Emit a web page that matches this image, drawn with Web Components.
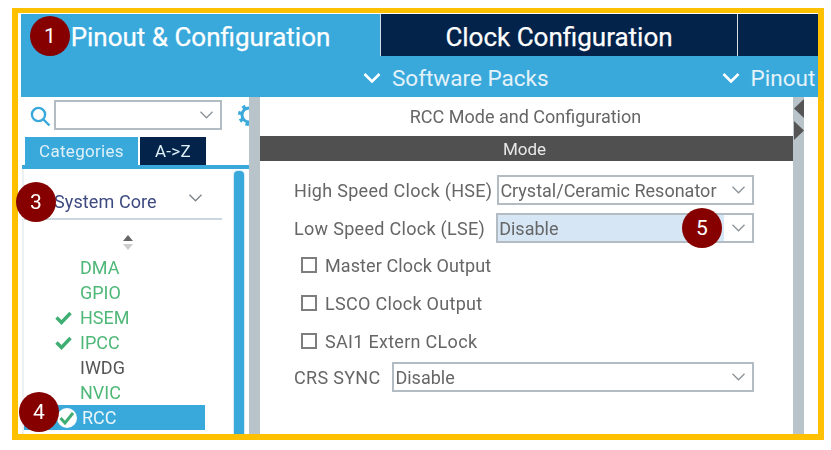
<!DOCTYPE html>
<html>
<head>
<meta charset="utf-8">
<style>
  html, body { margin: 0; background: #fff; }
  body { width: 831px; height: 450px; overflow: hidden; font-family: Roboto, "Liberation Sans", sans-serif; }
</style>
</head>
<body>
<cube-frame>
  <top-tabs></top-tabs>
  <sub-menu></sub-menu>
  <div slot="left"><side-panel></side-panel></div>
  <div slot="right"><mode-panel></mode-panel></div>
</cube-frame>
<step-badge n="1" style="left:30px;top:16px"></step-badge>
<step-badge n="3" style="left:16px;top:182px"></step-badge>
<step-badge n="4" style="left:19px;top:392px"></step-badge>
<step-badge n="5" style="left:682px;top:208px"></step-badge>

<script>
const CHEVRON = (w, h, color, sw) => `<svg width="${w}" height="${h}" viewBox="0 0 18 10" fill="none" stroke="${color}" stroke-width="${sw}" style="display:block;flex:none"><path d="M1.5 1 L9 8.5 L16.5 1"/></svg>`;

class CubeFrame extends HTMLElement {
  constructor() {
    super();
    this.shadowDOM = this.attachShadow({ mode: 'open' });
  }

  connectedCallback() {
    this.shadowDOM.innerHTML = `
    <style>
      :host {
        display: block;
        box-sizing: border-box;
        width: 812px;
        height: 432px;
        margin: 8px 0 0 12px;
        border: solid #ffc000;
        border-width: 5px 6px 6px 6px;
        background: #fff;
        overflow: hidden;
      }
      .inner { display: flex; flex-direction: column; height: 100%; box-sizing: border-box; padding: 1px 0 0 3px; filter: blur(.35px); }
      .body { display: flex; flex: 1; min-height: 0; }
    </style>
    <div class="inner">
      <slot></slot>
      <div class="body">
        <slot name="left"></slot>
        <slot name="right"></slot>
      </div>
    </div>
    `;
  }
}

class TopTabs extends HTMLElement {
  constructor() {
    super();
    this.shadowDOM = this.attachShadow({ mode: 'open' });
  }

  connectedCallback() {
    this.shadowDOM.innerHTML = `
    <style>
      :host { display: flex; height: 42px; background: #03234b; color: #fff; font-size: 26px; -webkit-text-stroke: .25px #fff; }
      div { display: flex; align-items: center; justify-content: center; box-sizing: border-box; padding-top: 3px; border-right: 1px solid #d5dde3; }
      .on { width: 360px; background: #39a9dc; }
      .off { width: 357px; }
      .end { flex: 1; border: 0; }
    </style>
    <div class="on">Pinout &amp; Configuration</div>
    <div class="off">Clock Configuration</div>
    <div class="end"></div>
    `;
  }
}

class SubMenu extends HTMLElement {
  constructor() {
    super();
    this.shadowDOM = this.attachShadow({ mode: 'open' });
  }

  connectedCallback() {
    this.shadowDOM.innerHTML = `
    <style>
      :host { display: flex; align-items: center; height: 41px; padding-left: 342px; background: #39a9dc; color: #e4f2f9; font-size: 22.5px; white-space: nowrap; overflow: hidden; }
      span { display: flex; align-items: center; gap: 11px; padding-top: 3px; }
      span + span { margin-left: 173px; }
    </style>
    <span>${CHEVRON(18, 10, '#fff', 2.6)}Software Packs</span>
    <span>${CHEVRON(18, 10, '#fff', 2.6)}Pinout</span>
    `;
  }
}

class ComboBox extends HTMLElement {
  constructor() {
    super();
    this.shadowDOM = this.attachShadow({ mode: 'open' });
  }

  connectedCallback() {
    this.shadowDOM.innerHTML = `
    <style>
      :host { display: flex; align-items: center; box-sizing: border-box; height: 30px; min-width: 0; border: 2px solid #b3bcc2; background: #fff; color: #666; font-size: 18px; letter-spacing: 0; white-space: nowrap; }
      :host([selected]) .text { background: #d6e6f5; align-self: stretch; display: flex; align-items: center; }
      .text { flex: 1; min-width: 0; padding-left: 1px; }
      .arrow { width: 28px; flex: none; display: flex; justify-content: center; }
    </style>
    <div class="text">${this.getAttribute('label') || '&nbsp;'}</div>
    <div class="arrow">${CHEVRON(15, 8, '#8b9297', 1.6)}</div>
    `;
  }
}

class SidePanel extends HTMLElement {
  constructor() {
    super();
    this.shadowDOM = this.attachShadow({ mode: 'open' });
  }

  connectedCallback() {
    const CHECK = `<svg style="display:block" width="17" height="14" viewBox="0 0 17 14" fill="none" stroke="#3fae72" stroke-width="3.4"><path d="M1.5 6.5 L6.5 11.5 L15.5 2"/></svg>`;
    const item = (name, color, check) => `<div class="item" style="color:${color}"><i>${check ? CHECK : ''}</i>${name}</div>`;
    this.shadowDOM.innerHTML = `
    <style>
      :host { display: flex; width: 239px; height: 100%; }
      .main { width: 228px; overflow: hidden; display: flex; flex-direction: column; }
      .strip { width: 11px; background: #b9c4ca; }
      .search { display: flex; align-items: flex-start; height: 40px; box-sizing: border-box; flex: none; padding: 3px 0 0 9px; overflow: hidden; }
      .search .lens { margin-top: 6px; flex: none; }
      .search combo-box { width: 168px; flex: none; margin-left: 3px; }
      .gear { margin: 3px 0 0 15px; flex: none; }
      .tabs { display: flex; gap: 2px; height: 28px; flex: none; padding-left: 4px; font-size: 17px; letter-spacing: .3px; color: #dff0f8; }
      .tabs div { display: flex; align-items: center; justify-content: center; padding-bottom: 1px; box-sizing: border-box; }
      .cat { width: 113px; background: #39a9dc; }
      .az { width: 66px; background: #03234b; }
      .rule { height: 4px; flex: none; margin-left: 1px; background: #39a9dc; }
      .content { flex: 1; display: flex; min-height: 0; border-left: 2px solid #eef0f2; margin-left: 1px; }
      .list { flex: 1; min-width: 0; }
      .bar { width: 10px; margin: 2px 5px 0 0; border-radius: 4px 4px 0 0; background: #39a9dc; box-shadow: 0 0 0 1px #d4ecf7; }
      .head { display: flex; align-items: center; justify-content: space-between; height: 51px; margin: 0 12px 0 0; padding: 16px 19px 0 30px; box-sizing: border-box; border-bottom: 2px solid #ccd6de; color: #3d4a80; font-size: 18px; letter-spacing: .1px; }
      .head svg { margin-top: -8px; }
      .sort { display: block; margin: 15px 0 0 98px; }
      .items { margin-top: 5px; }
      .item { display: flex; align-items: center; height: 25px; font-size: 18px; }
      .item i { width: 56px; padding-left: 31px; box-sizing: border-box; display: block; height: 14px; }
      .item.sel { width: 181px; background: #39a9dc; color: #e8f5fb !important; }
      .item.sel i { height: 18px; width: 58px; padding-left: 33px; }
      .dot { display: block; width: 20px; height: 20px; margin-top: -1px; border-radius: 50%; background: #fff; }
    </style>
    <div class="main">
      <div class="search">
        <svg class="lens" width="21" height="21" viewBox="0 0 21 21" fill="none" stroke="#39a9dc" stroke-width="2.4"><circle cx="8.5" cy="8.5" r="6.6"/><path d="M13.5 13.5 L19.5 19.5"/></svg>
        <combo-box></combo-box>
        <svg class="gear" width="24" height="24" viewBox="0 0 24 24"><circle cx="12" cy="12" r="7" fill="none" stroke="#39a9dc" stroke-width="3"/><circle cx="12" cy="12" r="9.5" fill="none" stroke="#39a9dc" stroke-width="3" stroke-dasharray="3.5 3.96"/></svg>
      </div>
      <div class="tabs"><div class="cat">Categories</div><div class="az">A-&gt;Z</div></div>
      <div class="rule"></div>
      <div class="content">
        <div class="list">
          <div class="head">System Core ${CHEVRON(15, 8, '#7b8288', 1.6)}</div>
          <svg class="sort" width="12" height="15" viewBox="0 0 12 15"><path d="M6 0 L11 6 H1z" fill="#666"/><path d="M6 15 L11 9 H1z" fill="#ccc"/></svg>
          <div class="items">
            ${item('DMA', '#4fb878')}
            ${item('GPIO', '#4fb878')}
            ${item('HSEM', '#4fb878', true)}
            ${item('IPCC', '#4fb878', true)}
            ${item('IWDG', '#555')}
            ${item('NVIC', '#4fb878')}
            <div class="item sel"><i><span class="dot"><svg width="20" height="20" viewBox="0 0 20 20" fill="none" stroke="#3fae72" stroke-width="3"><path d="M3.5 10 L8 15 L16 5"/></svg></span></i>RCC</div>
          </div>
        </div>
        <div class="bar"></div>
      </div>
    </div>
    <div class="strip"></div>
    `;
  }
}

class ModePanel extends HTMLElement {
  constructor() {
    super();
    this.shadowDOM = this.attachShadow({ mode: 'open' });
  }

  connectedCallback() {
    const check = (name, spacing) => `<label style="letter-spacing:${spacing}px"><b></b>${name}</label>`;
    this.shadowDOM.innerHTML = `
    <style>
      :host { display: flex; width: 558px; height: 100%; color: #666; font-size: 18px; white-space: nowrap; }
      .main { width: 533px; flex: none; }
      .title { display: flex; align-items: center; justify-content: center; height: 39px; padding-right: 2px; box-sizing: border-box; }
      .mode { display: flex; align-items: center; justify-content: center; height: 25px; padding-right: 4px; box-sizing: border-box; background: #505050; color: #e8e8e8; font-size: 17px; }
      .form { display: flex; flex-direction: column; padding: 14px 39px 0 34px; }
      .row { display: flex; align-items: center; height: 30px; letter-spacing: .3px; }
      .row combo-box { flex: 1; }
      .row + .row { margin-top: 8px; }
      .hse combo-box { margin-left: 5px; }
      .lse combo-box { margin-left: 11px; }
      .crs combo-box { margin-left: 12px; }
      label { display: flex; align-items: center; gap: 8px; height: 22px; margin: 0 0 16px 7px; }
      label:first-of-type { margin-top: 11px; }
      b { display: block; box-sizing: border-box; width: 16px; height: 16px; border: 2px solid #7e7e7e; background: #fff; }
      .strip { position: relative; width: 11px; flex: none; background: #b9c4ca; }
      .strip svg { position: absolute; left: 1px; }
    </style>
    <div class="main">
      <div class="title">RCC Mode and Configuration</div>
      <div class="mode">Mode</div>
      <div class="form">
        <div class="row hse">High Speed Clock (HSE)<combo-box label="Crystal/Ceramic Resonator"></combo-box></div>
        <div class="row lse">Low Speed Clock (LSE)<combo-box selected label="Disable"></combo-box></div>
        ${check('Master Clock Output', .1)}
        ${check('LSCO Clock Output', .3)}
        ${check('SAI1 Extern CLock', .3)}
        <div class="row crs" style="margin-top:-6px">CRS SYNC<combo-box label="Disable"></combo-box></div>
      </div>
    </div>
    <div class="strip">
      <svg style="top:2px" width="10" height="19" viewBox="0 0 10 19"><path d="M10 0 V19 L0 9.5z" fill="#555"/></svg>
      <svg style="top:24px" width="10" height="19" viewBox="0 0 10 19"><path d="M0 0 V19 L10 9.5z" fill="#555"/></svg>
    </div>
    `;
  }
}

class StepBadge extends HTMLElement {
  constructor() {
    super();
    this.shadowDOM = this.attachShadow({ mode: 'open' });
  }

  connectedCallback() {
    this.shadowDOM.innerHTML = `
    <style>
      :host { position: absolute; display: flex; align-items: center; justify-content: center; width: 40px; height: 40px; border-radius: 50%; background: #860000; color: #fff; font-size: 21px; }
    </style>
    ${this.getAttribute('n')}
    `;
  }
}

customElements.define('cube-frame', CubeFrame);
customElements.define('top-tabs', TopTabs);
customElements.define('sub-menu', SubMenu);
customElements.define('combo-box', ComboBox);
customElements.define('side-panel', SidePanel);
customElements.define('mode-panel', ModePanel);
customElements.define('step-badge', StepBadge);
</script>
</body>
</html>
